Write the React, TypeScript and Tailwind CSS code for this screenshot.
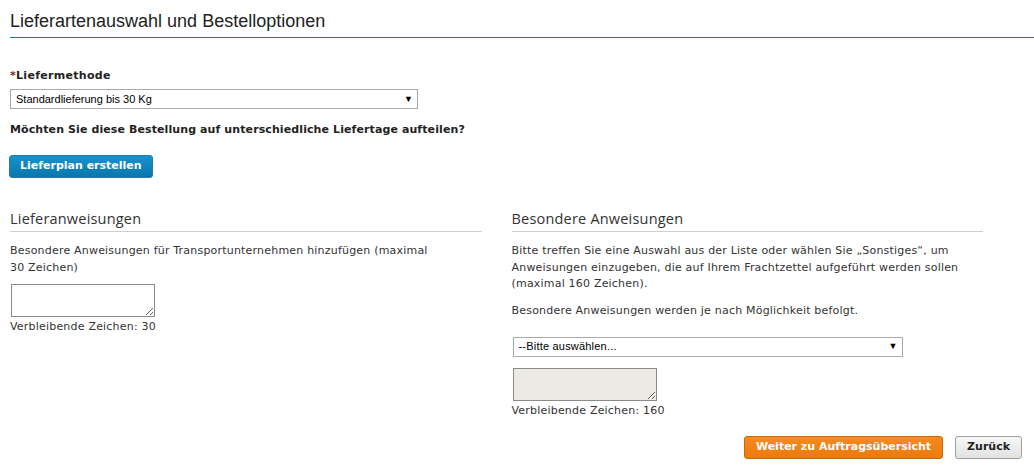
import { useState } from 'react'

const body = "font-['DejaVu_Sans',Verdana,sans-serif] text-[11px] text-[#333]"

function Select({ value, className }: { value: string; className: string }) {
  return (
    <div
      className={`flex items-center justify-between h-[20px] border border-[#a9a9a9] bg-white pl-[5px] pr-[4px] font-['Liberation_Sans',Arial,sans-serif] text-[11px] text-black ${className}`}
    >
      <span>{value}</span>
      <span className="text-[9px] leading-none">▼</span>
    </div>
  )
}

function Counter({ max, disabled = false }: { max: number; disabled?: boolean }) {
  const [text, setText] = useState('')
  return (
    <div>
      <textarea
        value={text}
        disabled={disabled}
        maxLength={max}
        onChange={(e) => setText(e.target.value)}
        className={`block w-[144px] h-[33px] border border-[#8a8a8a] ml-[1px] ${disabled ? 'bg-[#ebebe4]' : 'bg-white'}`}
      />
      <p className="mt-[2px] leading-[16px] tracking-[0.2px]">Verbleibende Zeichen: {max - text.length}</p>
    </div>
  )
}

function SectionHead({ children }: { children: string }) {
  return (
    <h2 className="border-b border-[#cfcfcf] pb-[2px] font-['Open_Sans',sans-serif] text-[14.5px] leading-[20px] text-[#333]">
      {children}
    </h2>
  )
}

export default function App() {
  return (
    <div className={`${body} bg-white min-h-[469px] pl-[10px] pt-[10px]`}>
      {/* Page title */}
      <h1 className="border-b border-[#1a7498] pb-[5px] font-['Liberation_Sans',Arial,sans-serif] text-[18px] leading-[22px] text-[#222]">
        Lieferartenauswahl und Bestelloptionen
      </h1>

      <div className="w-[973px]">
        <label className="block mt-[30px] font-bold text-[#222] leading-[16px] tracking-[0.3px]">
          <span className="text-[#7a2a2a]">*</span>Liefermethode
        </label>
        <Select value="Standardlieferung bis 30 Kg" className="w-[408px] mt-[5px]" />

        <p className="mt-[13px] font-bold text-[#222] leading-[16px] tracking-[0.1px]">
          Möchten Sie diese Bestellung auf unterschiedliche Liefertage aufteilen?
        </p>

        <button
          type="button"
          className="mt-[17px] -ml-[1px] h-[23px] px-[10px] rounded-[3px] border border-[#2b7aa3] bg-gradient-to-b from-[#1493cf] to-[#0a76ad] font-bold text-white text-[11px]"
        >
          Lieferplan erstellen
        </button>

        <div className="grid grid-cols-2 gap-[30px] mt-[31px] tracking-[0.2px]">
          {/* Left column */}
          <div>
            <SectionHead>Lieferanweisungen</SectionHead>
            <p className="mt-[10px] w-[425px] leading-[17px]">
              Besondere Anweisungen für Transportunternehmen hinzufügen (maximal 30 Zeichen)
            </p>
            <div className="mt-[8px]">
              <Counter max={30} />
            </div>
          </div>

          {/* Right column */}
          <div>
            <SectionHead>Besondere Anweisungen</SectionHead>
            <p className="mt-[11px] w-[455px] leading-[16.5px]">
              Bitte treffen Sie eine Auswahl aus der Liste oder wählen Sie „Sonstiges“, um Anweisungen
              einzugeben, die auf Ihrem Frachtzettel aufgeführt werden sollen (maximal 160 Zeichen).
            </p>
            <p className="mt-[10px] leading-[16px]">
              Besondere Anweisungen werden je nach Möglichkeit befolgt.
            </p>
            <Select value="--Bitte auswählen..." className="w-[390px] mt-[18px] ml-[1px]" />
            <div className="mt-[11px]">
              <Counter max={160} disabled />
            </div>
          </div>
        </div>
      </div>

      <div className="flex justify-end gap-[12px] pr-[12px] mt-[17px]">
        <button
          type="button"
          className="h-[23px] px-[11px] rounded-[3px] border border-[#c86a10] bg-gradient-to-b from-[#f88a1e] to-[#ec7a0c] font-bold text-white text-[11px]"
        >
          Weiter zu Auftragsübersicht
        </button>
        <button
          type="button"
          className="h-[23px] px-[11px] rounded-[3px] border border-[#a0a0a0] bg-gradient-to-b from-[#f7f7f7] to-[#e2e2e2] font-bold text-[#222] text-[11px]"
        >
          Zurück
        </button>
      </div>
    </div>
  )
}
